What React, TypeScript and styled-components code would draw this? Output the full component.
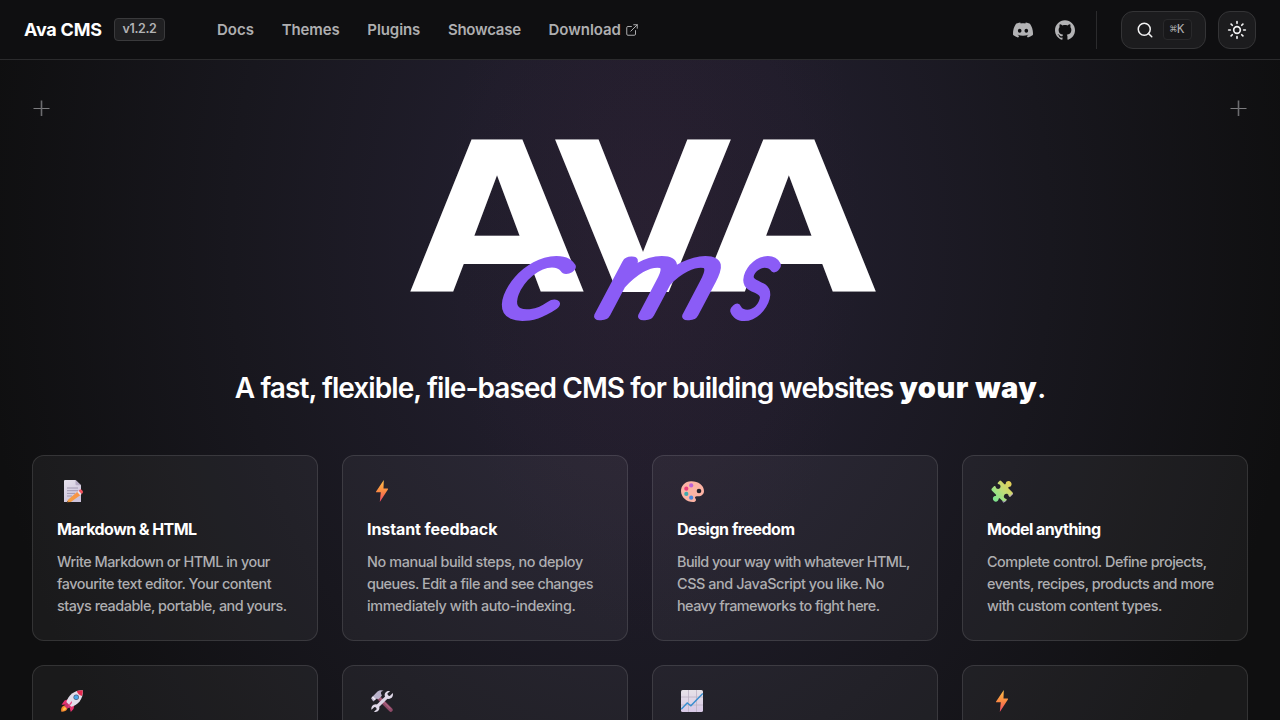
import React from "react";
import styled, { createGlobalStyle } from "styled-components";
import { ExternalLink, Search, Sun } from "lucide-react";
import { SiDiscord, SiGithub } from "react-icons/si";

const GlobalStyle = createGlobalStyle`
  *, *::before, *::after { box-sizing: border-box; }
  body {
    margin: 0;
    background: #0f0f10;
    color: #fff;
    font-family: Inter, "Liberation Sans", sans-serif;
    overflow: hidden;
  }
  svg { display: block; flex: none; }
`;

const Page = styled.div`
  width: 100%;
  height: 720px;
  overflow: hidden;
  display: flex;
  flex-direction: column;
  background:
    radial-gradient(ellipse 260px 520px at 655px 230px, rgba(70, 36, 60, 0.16), transparent 80%),
    radial-gradient(ellipse 660px 860px at 640px 240px, #231f2f 0%, #201d2b 28%, #18171e 62%, #0f0f10 100%);
`;

const Header = styled.header`
  flex: none;
  height: 60px;
  padding: 0 24px;
  display: flex;
  align-items: center;
  justify-content: space-between;
  background: #0f0f11;
  border-bottom: 1px solid #2b2b2d;
`;

const HeaderSide = styled.div`
  display: flex;
  align-items: center;
`;

const Brand = styled.span`
  font-size: 18px;
  font-weight: 700;
  line-height: 24px;
  width: 78px;
  letter-spacing: -0.24px;
  white-space: nowrap;
`;

const Version = styled.span`
  margin-left: 12px;
  width: 51px;
  height: 23px;
  border: 1px solid #3a3a3c;
  border-radius: 4px;
  background: #202022;
  color: #b2b2b4;
  font-size: 12.5px;
  font-weight: 600;
  line-height: 20px;
  letter-spacing: -0.36px;
  text-align: center;
`;

const Nav = styled.nav`
  margin-left: 52px;
  display: flex;
  gap: 27.7px;
`;

const NavLink = styled.a<{ $tracking: number }>`
  display: flex;
  align-items: center;
  gap: 4px;
  color: #aeaeb0;
  font-size: 15px;
  font-weight: 600;
  line-height: 20px;
  letter-spacing: ${(p) => p.$tracking}px;
`;

const SocialLinks = styled.div`
  margin-right: 21px;
  display: flex;
  gap: 22px;
  color: #b3b3b5;
`;

const Divider = styled.span`
  width: 1px;
  height: 38px;
  margin-right: 24px;
  background: #2b2b2d;
`;

const ToolButton = styled.button<{ $width: number }>`
  width: ${(p) => p.$width}px;
  height: 38px;
  margin: 0;
  padding: 0;
  display: flex;
  align-items: center;
  justify-content: center;
  gap: 9px;
  border: 1px solid #343436;
  border-radius: 12px;
  background: #1c1c1e;
  color: #f2f2f3;
  & + & { margin-left: 12px; }
`;

const Shortcut = styled.kbd`
  width: 29px;
  height: 21px;
  border: 1px solid #29292b;
  border-radius: 4px;
  background: #18181a;
  color: #b0b0b2;
  font: 400 12px/19px "DejaVu Sans Mono", monospace;
  letter-spacing: 0;
  text-align: center;
`;

const Hero = styled.main`
  position: relative;
  flex: 1;
  padding: 70px 32px 0;
  display: flex;
  flex-direction: column;
  align-items: center;
`;

const CornerMark = styled.svg<{ $side: "left" | "right" }>`
  position: absolute;
  top: 40px;
  ${(p) => p.$side}: 33px;
`;

const Tagline = styled.h1`
  margin: 36px 0 45px;
  font-size: 28px;
  font-weight: 600;
  line-height: 44px;
  letter-spacing: -0.93px;
  white-space: pre;
  strong {
    font-weight: 900;
    font-size: 29px;
    letter-spacing: 0.5px;
  }
`;

const Grid = styled.section`
  width: 100%;
  display: grid;
  grid-template-columns: repeat(4, 1fr);
  gap: 24px;
`;

const Card = styled.article`
  height: 186px;
  padding: 23px 24px;
  border: 1px solid rgba(255, 255, 255, 0.115);
  border-radius: 12px;
  background: rgba(255, 255, 255, 0.048);
`;

const Emoji = styled.svg`
  margin: 0 0 14px 3px;
`;

const CardTitle = styled.h2<{ $tracking: number }>`
  margin: 0 0 10px;
  font-size: 16px;
  font-weight: 700;
  line-height: 24px;
  letter-spacing: ${(p) => p.$tracking}px;
  white-space: nowrap;
`;

const CardText = styled.p`
  margin: 0;
  color: #aeaeb1;
  font-size: 14.4px;
  font-weight: 500;
  line-height: 22px;
`;

const Line = styled.span<{ $tracking: number }>`
  display: block;
  letter-spacing: ${(p) => p.$tracking}px;
  white-space: nowrap;
`;

const navItems = [
  { label: "Docs", tracking: 0.02 },
  { label: "Themes", tracking: -0.11 },
  { label: "Plugins", tracking: -0.09 },
  { label: "Showcase", tracking: -0.24 },
  { label: "Download", tracking: -0.03, external: true },
];

const MemoIcon = () => (
  <Emoji width="24" height="24" viewBox="0 0 24 24">
    <defs>
      <linearGradient id="memo" x1="0" y1="0" x2="0.5" y2="1">
        <stop offset="0" stopColor="#e6e2ec" />
        <stop offset="1" stopColor="#cdc3dc" />
      </linearGradient>
      <linearGradient id="pencil" x1="1" y1="0" x2="0" y2="1">
        <stop offset="0" stopColor="#fb8f4a" />
        <stop offset="1" stopColor="#f2a03f" />
      </linearGradient>
    </defs>
    <path d="M5 1h10.5L21 6.3V23H4V2a1 1 0 0 1 1-1z" fill="url(#memo)" />
    <path d="M15.5 1v4.3a1 1 0 0 0 1 1H21z" fill="#b6abc5" />
    <path d="M7 9h11M7 11.7h11M7 14.4h8M7 17h5" stroke="#9a91aa" strokeWidth="0.9" />
    <path d="M8 20.8 18 12.3l3 3.4-10.2 7.4L7 23.2z" fill="url(#pencil)" />
    <path d="m17.2 13 1.5-1.3 3 3.4-1.6 1.2z" fill="#e9e4ee" />
    <path d="m18.7 11.7 1-.9c1.5-1.1 4.1 1.5 3 3.1l-1 1.2z" fill="#f2545f" />
    <path d="m7.4 21.9 1 1.2L7 23.2z" fill="#5a3b3b" />
  </Emoji>
);

const BoltIcon = () => (
  <Emoji width="24" height="24" viewBox="0 0 24 24">
    <defs>
      <linearGradient id="bolt" x1="0" y1="0" x2="0" y2="1">
        <stop offset="0" stopColor="#ffc04a" />
        <stop offset="0.5" stopColor="#fb8b42" />
        <stop offset="1" stopColor="#f0476a" />
      </linearGradient>
    </defs>
    <path d="M13.8 1 6.1 12.4c-.3.5 0 .9.5.9h4.2L9.8 23l8.1-12.6c.3-.5 0-.9-.5-.9h-3.9z" fill="url(#bolt)" />
  </Emoji>
);

const PaletteIcon = () => (
  <Emoji width="24" height="24" viewBox="0 0 24 24">
    <path
      d="M11 2.200C5 2.300 1 6.800 1 12c0 6.200 5.600 11 12.100 11 2.800 0 3.600-2 2.300-3.500-1-1.300 0-2.500 1.700-2.300 4.100.4 6.900-1.600 6.900-5.200C24 6 18 2 11 2.200z"
      fill="#fcb3a4"
    />
    <circle cx="19" cy="12" r="2.3" fill="#24202c" />
    <circle cx="11.2" cy="6.4" r="2.1" fill="#bd62d8" />
    <circle cx="6.3" cy="9.7" r="2.1" fill="#ee3f7c" />
    <circle cx="6.3" cy="14.9" r="2.1" fill="#3fa9ad" />
    <circle cx="11.2" cy="18.7" r="2.1" fill="#4c86dc" />
  </Emoji>
);

const PuzzleIcon = () => (
  <Emoji width="24" height="24" viewBox="0 0 24 24">
    <defs>
      <linearGradient id="puzzle" x1="0.9" y1="0.1" x2="0.1" y2="0.8">
        <stop offset="0" stopColor="#e6cf58" />
        <stop offset="0.5" stopColor="#bfdd78" />
        <stop offset="1" stopColor="#7fe38e" />
      </linearGradient>
    </defs>
    <path
      d="M9.2 2.200q1-1.200 2-.1l3 3c.8.700 1.600.2 1.600-.8.300-2.400 3.400-3 4.900-1.400 1.600 1.600 1 4.500-1.300 4.900-1.200.2-1.500 1-.8 1.700l4 4q.9.900 0 1.800l-2.200 2.200c-.7.700-1.500.4-1.700-.8-.4-2.100-3-2.300-4.100-1.100-1.300 1.300-1 3.700 1 4.100 1.200.2 1.500 1 .8 1.700l-1.600 1.300q-.9.800-1.800-.1l-2.800-2.900c-.8-.8-1.600-.3-1.700.9-.3 2.100-3.200 2.700-4.700 1.200s-1.100-4.300 1.200-4.700c1.200-.2 1.500-1 .8-1.700l-4-4q-.9-.9 0-1.800L4 7.300c.7-.7 1.500-.4 1.700.8.400 2 2.900 2.400 4.100 1.100 1.300-1.200 1-3.600-1-4-1.200-.2-1.500-1-.8-1.700z"
      fill="url(#puzzle)"
    />
    <path d="M23 14.500 20.400 17q-.8.700-1.300-.6M15.900 21.500l-1.700 1.400q-.9.600-1.600-.2" fill="none" stroke="#b99bd6" strokeWidth="0.9" />
  </Emoji>
);

const RocketIcon = () => (
  <Emoji width="24" height="24" viewBox="0 0 24 24">
    <path d="M1.400 22.800c-.8-3.300.6-6 3.200-6.300 2.300 0 3.400 1.600 2.600 3.600-.8 2-3 2.800-5.800 2.700z" fill="#f58a2e" />
    <path d="M3 21.400c-.1-1.800.6-3 1.800-3.200 1.300 0 1.600 1 1.100 1.800-.6.900-1.500 1.300-2.900 1.400z" fill="#ffc94d" />
    <path d="M9 10 4.500 11.400 1.600 15.800l6-.3zM14.500 15.500l-1 4.500-2.700 3-1.500-5.800z" fill="#e8336f" />
    <path d="M22.800 1.200c-8-.2-14.800 4.300-16.800 13.100l3.900 4C18.400 16.200 23.400 9.500 22.800 1.200z" fill="#e2dce9" />
    <path d="M22.800 1.200q-3.300-.1-6 .8c.6 2.400 2.700 4.500 5.200 5q.9-2.900.8-5.800z" fill="#e52b4f" />
    <path d="m6.300 13-1.800 4.100 2.500 2.500 4.400-1.700z" fill="#c9316c" />
    <path d="M12 12c-2 1.800-3.500 4.200-4 7l3.900-5z" fill="#f04684" />
    <circle cx="16.2" cy="8.2" r="2.7" fill="#4b607f" />
    <circle cx="16.2" cy="8.2" r="2" fill="#4aa6ea" />
  </Emoji>
);

const ToolsIcon = () => (
  <Emoji width="24" height="24" viewBox="0 0 24 24">
    <path d="m8.500 8.500 12.300 12.400" stroke="#8f4a68" strokeWidth="4" strokeLinecap="round" />
    <path d="m8.600 7.700 11.800 11.900" stroke="#ac6680" strokeWidth="1.2" />
    <path d="M1 9.300 7.500 2.400c2-1.500 4.300-1.600 6-.6-2.200.3-3 1.600-2.300 3.200l.7 1.800-3.200 3.200-2.200-.3-3.200 2.800z" fill="#b9b1ca" />
    <path d="m2.300 7.800 2.800 2.800" stroke="#eee9f3" strokeWidth="1.8" />
    <path d="m6.300 18.400 12-11.800" stroke="#ddd5e6" strokeWidth="3.4" />
    <path
      d="M20.200 2.100c-3.500-1-6.400 2-5.300 5.200 1.100 3.400 5.900 3.300 7.500.5.700-1.300.7-2.500.4-3.700l-3 3-2-.6-.4-2zM4 22.700c3.500 1 6.200-1.900 5.200-5-1-3.300-5.700-3.100-7.200-.4-.7 1.200-.8 2.400-.5 3.500l2.900-2.700 1.800.4.500 1.700z"
      fill="#e0d9e9"
    />
  </Emoji>
);

const ChartIcon = () => (
  <Emoji width="24" height="24" viewBox="0 0 24 24">
    <defs>
      <linearGradient id="chart" x1="0" y1="0" x2="0" y2="1">
        <stop offset="0" stopColor="#e7e2e8" />
        <stop offset="1" stopColor="#d8c8e6" />
      </linearGradient>
    </defs>
    <rect x="1" y="1" width="22" height="22" rx="1.6" fill="url(#chart)" />
    <path d="M8.500 1v22M16.500 1v22M1 8h22M1 16h22" stroke="#bdb2c4" strokeWidth="0.8" />
    <path d="m1.200 20.300 6-6.400 3.700 2.900L22.800 4.500" fill="none" stroke="#3b8fcf" strokeWidth="1.5" />
  </Emoji>
);

const features = [
  {
    icon: MemoIcon,
    title: "Markdown & HTML",
    tracking: -0.57,
    lines: [
      ["Write Markdown or HTML in your", -0.48],
      ["favourite text editor. Your content", -0.45],
      ["stays readable, portable, and yours.", -0.475],
    ],
  },
  {
    icon: BoltIcon,
    title: "Instant feedback",
    tracking: -0.08,
    lines: [
      ["No manual build steps, no deploy", -0.39],
      ["queues. Edit a file and see changes", -0.485],
      ["immediately with auto-indexing.", -0.38],
    ],
  },
  {
    icon: PaletteIcon,
    title: "Design freedom",
    tracking: -0.48,
    lines: [
      ["Build your way with whatever HTML,", -0.535],
      ["CSS and JavaScript you like. No", -0.415],
      ["heavy frameworks to fight here.", -0.545],
    ],
  },
  {
    icon: PuzzleIcon,
    title: "Model anything",
    tracking: -0.58,
    lines: [
      ["Complete control. Define projects,", -0.46],
      ["events, recipes, products and more", -0.465],
      ["with custom content types.", -0.46],
    ],
  },
] as const;

const moreIcons = [RocketIcon, ToolsIcon, ChartIcon, BoltIcon];

const Plus = ({ side }: { side: "left" | "right" }) => (
  <CornerMark $side={side} width="17" height="17" viewBox="0 0 17 17">
    <path d="M0.500 8.500h16" stroke="#7c7c7f" />
    <path d="M8.500 0.500v15.500" stroke="#6c6c6f" strokeWidth="1.6" />
  </CornerMark>
);

const Wordmark = () => (
  <svg width="490" height="200" viewBox="395 130 490 200" role="img" aria-label="Ava CMS">
    <g fill="#fff" fontFamily="DejaVu Sans" fontWeight="700" fontSize="208">
      <text transform="translate(409.2 292.2) scale(1.09 1)">A</text>
      <text transform="translate(554 292.2) scale(1.105 1)">V</text>
      <text transform="translate(700.8 292.2) scale(1.094 1)">A</text>
    </g>
    <g
      fill="#8b5cf6"
      stroke="#8b5cf6"
      strokeWidth="10.5"
      strokeLinejoin="round"
      strokeLinecap="round"
      fontFamily="Lato"
      fontStyle="italic"
      fontWeight="100"
      fontSize="108"
    >
      <text transform="translate(497 315) skewX(-20) scale(1.24 1)">c</text>
      <text transform="translate(594 315) skewX(-20) scale(1.37 1)">m</text>
      <text transform="translate(732 315) skewX(-14) scale(0.86 1)">s</text>
    </g>
  </svg>
);

export default function App() {
  return (
    <>
      <GlobalStyle />
      <Page>
        <Header>
          <HeaderSide>
            <Brand>Ava CMS</Brand>
            <Version>v1.2.2</Version>
            <Nav>
              {navItems.map((item) => (
                <NavLink key={item.label} $tracking={item.tracking}>
                  {item.label}
                  {item.external && <ExternalLink size={14} strokeWidth={1.7} />}
                </NavLink>
              ))}
            </Nav>
          </HeaderSide>
          <HeaderSide>
            <SocialLinks>
              <SiDiscord size={20} />
              <SiGithub size={20} />
            </SocialLinks>
            <Divider />
            <ToolButton $width={85}>
              <Search size={18} strokeWidth={2} />
              <Shortcut>⌘K</Shortcut>
            </ToolButton>
            <ToolButton $width={38}>
              <Sun size={20} strokeWidth={2} />
            </ToolButton>
          </HeaderSide>
        </Header>
        <Hero>
          <Plus side="left" />
          <Plus side="right" />
          <Wordmark />
          <Tagline>
            A fast, flexible, file-based CMS for building websites <strong>your way</strong>.
          </Tagline>
          <Grid>
            {features.map(({ icon: Icon, title, tracking, lines }) => (
              <Card key={title}>
                <Icon />
                <CardTitle $tracking={tracking}>{title}</CardTitle>
                <CardText>
                  {lines.map(([text, lineTracking]) => (
                    <Line key={text} $tracking={lineTracking}>{text}</Line>
                  ))}
                </CardText>
              </Card>
            ))}
            {moreIcons.map((Icon, index) => (
              <Card key={index}>
                <Icon />
              </Card>
            ))}
          </Grid>
        </Hero>
      </Page>
    </>
  );
}
